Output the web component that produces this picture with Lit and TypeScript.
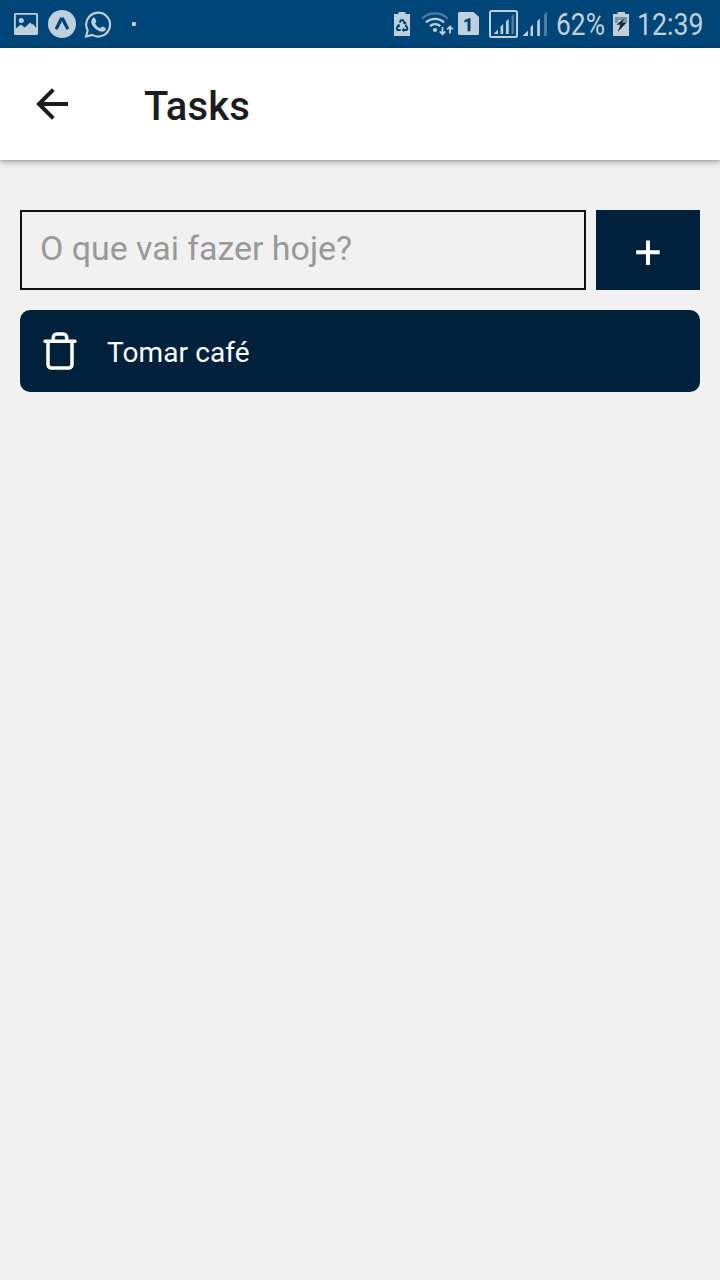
import { LitElement, html, svg, css } from "lit";
import { customElement, property, state } from "lit/decorators.js";

@customElement("status-bar")
class StatusBar extends LitElement {
  static styles = css`
    :host { display: flex; justify-content: space-between; height: 48px; background: #004578; color: #bfd0dd; }
    .group { display: flex; }
    .left { padding-left: 12px; }
    .right { padding-right: 12px; }
    svg { display: block; fill: currentColor; flex: none; overflow: visible; }
    .line { fill: none; stroke: currentColor; }
    .cut { fill: #004578; }
    .cutline { fill: none; stroke: #004578; }
    .dim { opacity: 0.4; }
    text { font-family: Roboto, sans-serif; font-size: 30.5px; }
  `;

  // Every glyph is drawn in bar coordinates; x and w select its slot.
  private slotOf(x: number, w: number, content: unknown) {
    return html`<svg width=${w} height="48" viewBox="${x} 0 ${w} 48">${content}</svg>`;
  }

  render() {
    return html`
      <div class="group left">
        ${this.slotOf(12, 32, svg`
          <path fill-rule="evenodd" d="M15.5 13h21a1.5 1.5 0 0 1 1.5 1.5v19a1.5 1.5 0 0 1-1.5 1.5h-21a1.5 1.5 0 0 1-1.5-1.5v-19a1.5 1.5 0 0 1 1.5-1.5zM15.800 14.800v13.700l5-4 4 3 5.500-5 1.700 2 1-.6 3.200 4.100V14.800z"/>
          <circle cx="21.300" cy="20.500" r="2.500"/>`)}
        ${this.slotOf(44, 36, svg`
          <circle cx="62" cy="24" r="14"/>
          <path class="cut" d="M60.200 17.500h3.600c1.800 3 3.400 7 5.200 10.200.3.800-1.600 2.400-2.600 1.800-1.700-2.300-2.800-5.400-4.400-8.200-1.600 2.800-2.700 5.900-4.400 8.200-1 .6-2.900-1-2.600-1.800 1.800-3.200 3.400-7.200 5.200-10.200z"/>`)}
        ${this.slotOf(80, 40, svg`
          <path class="line" stroke-width="2.100" d="M86 36.600l1.700-6.300a11.900 11.900 0 1 1 4.500 4.600z"/>
          <path d="M93 17.900c.7-.5 1.600-.4 2 .4l1.300 2.900c.3.800-.9 1.600-1.300 2.200 1.300 2.400 2.900 3.800 5.300 4.900.8-.6 1.500-2.100 2.300-1.800l2.900 1.400c.8.500.1 2.500-.8 3.100-2.100 1.500-5 .5-7.400-.9-2.800-1.600-5.100-4.300-5.800-6.800-.5-2.100.1-4.400 1.500-5.400z"/>`)}
        ${this.slotOf(120, 20, svg`<path d="M132.500 22h2.500l1 1v2l-1 1h-2.500l-.5-.5v-3z"/>`)}
      </div>
      <div class="group right">
        ${this.slotOf(390, 26, svg`
          <path d="M398.500 12h7v2h4.500v22h-16v-22h4.500z"/>
          <path class="cutline" stroke-width="2" d="M399.600 22.500l1.300-2.200h2.200l1.700 2.900M398.600 25l-1.900 3.400.8 1.500h3.200M405.600 25l1.900 3.400-.8 1.500h-2.700"/>
          <path class="cut" d="M406.300 21.500v3.200l-3.500-1zM404.200 27.600v4.600l-2.600-2.300zM396.300 25.500l3.200-1.400.7 3.200z"/>`)}
        ${this.slotOf(416, 39, svg`
          <path class="line dim" stroke-width="2.300" d="M422.300 18.300a18.800 18.800 0 0 1 25.400 0"/>
          <path class="line" stroke-width="2.300" d="M426 22.300a13.300 13.300 0 0 1 18 0M430 26.200a7.500 7.500 0 0 1 10.300 0"/>
          <circle cx="435" cy="30" r="2.100"/>
          <path class="line" stroke-width="1.800" d="M442.500 27v7.500M439.700 31.400l2.800 2.900 2.800-2.900M450 33.500v-7M447.200 29.400l2.800-2.900 2.800 2.900"/>`)}
        ${this.slotOf(455, 29, svg`
          <path d="M459.500 12h14l5.500 5v16.500a1.500 1.500 0 0 1-1.500 1.500h-18a1.500 1.500 0 0 1-1.500-1.500v-20a1.500 1.500 0 0 1 1.500-1.500z"/>
          <path class="cut" d="M470.500 18v13.300h-3v-9.800l-3 1v-2.400l5.200-2.100z"/>`)}
        ${this.slotOf(484, 37, svg`
          <rect class="line" x="490" y="11" width="27" height="26" rx="1.500" stroke-width="2"/>
          <path d="M493.500 34l4.500-4.500V34zM500.500 34v-7.500l2.700-2.500v10zM506 34V21.500l2.700-2.700V34z"/>
          <path class="dim" d="M511.500 34V16.500l2.500-2.500v20z"/>`)}
        ${this.slotOf(521, 34, svg`
          <path d="M522.500 36l5.500-5.500V36zM530.500 36v-9l2.500-2.500V36zM537.200 36V21.200l2.700-2.700V36z"/>
          <path class="dim" d="M544 36V14.500l3-3V36z"/>`)}
        ${this.slotOf(555, 53, svg`<text x="556" y="34.800" textLength="49" lengthAdjust="spacingAndGlyphs">62%</text>`)}
        ${this.slotOf(608, 25, svg`
          <path d="M617.500 12h7.500v2h4v22h-16v-22h4.500z"/>
          <path fill="#7595ae" d="M615 17h12v6h-12z"/>
          <path fill="#bfd0dd" d="M618 20h5v4h-5z"/>
          <path fill="#1b2630" d="M624 18.500l-7.600 6.300h4l-2.700 7.200 8.700-9.200h-4z"/>`)}
        ${this.slotOf(633, 75, svg`<text x="637" y="34.800" textLength="66.500" lengthAdjust="spacingAndGlyphs">12:39</text>`)}
      </div>`;
  }
}

@customElement("task-item")
class TaskItem extends LitElement {
  @property() label = "";

  static styles = css`
    :host { display: flex; align-items: center; height: 82px; box-sizing: border-box; padding-left: 22px;
      border-radius: 10px; background: #00213b; color: #fff; font: 28px/36px Roboto, sans-serif; }
    svg { display: block; margin-right: 29px; fill: none; stroke: currentColor; stroke-width: 3.500; stroke-linecap: round; stroke-linejoin: round; }
    .label { padding-top: 4px; letter-spacing: 0.1px; }
  `;

  render() {
    return html`
      <svg width="36" height="40" viewBox="42 331 36 40">
        <path d="M45 341.200h30M48 341.500V364.500a3.500 3.500 0 0 0 3.500 3.500h17a3.500 3.500 0 0 0 3.500-3.500v-23M53.300 341v-3.500a3.500 3.500 0 0 1 3.500-3.500h6.400a3.500 3.500 0 0 1 3.500 3.500v3.500"/>
      </svg>
      <span class="label">${this.label}</span>`;
  }
}

@customElement("app-root")
class AppRoot extends LitElement {
  @state() private tasks = ["Tomar café"];

  static styles = css`
    :host { display: flex; flex-direction: column; min-height: 1280px; background: #f1f1f1; font-family: Roboto, sans-serif; }
    header { display: flex; align-items: center; height: 112px; padding-left: 32px; box-sizing: border-box; background: #fff;
      box-shadow: 0 2px 6px rgba(0, 0, 0, 0.33), 0 0 2px rgba(0, 0, 0, 0.15); }
    .back { display: block; fill: none; stroke: #1c1c1e; stroke-width: 4; margin-right: 72px; }
    h1 { margin: 0; padding-top: 6px; font-size: 40px; line-height: 48px; font-weight: 500; color: #1c1c1e; letter-spacing: 0.1px; }
    main { display: flex; flex-direction: column; gap: 20px; padding: 50px 20px; }
    form { display: flex; gap: 10px; height: 80px; }
    input { flex: 1; min-width: 0; box-sizing: border-box; margin: 0; padding: 0 18px 5px; border: 2px solid #111; border-radius: 0;
      background: transparent; font: 34px Roboto, sans-serif; color: #222; letter-spacing: -0.05px; outline: none; }
    input::placeholder { color: #999; opacity: 1; }
    .add { width: 104px; padding: 0; border: 0; background: #00213b; display: flex; align-items: center; justify-content: center; }
    .add svg { display: block; fill: none; stroke: #fff; stroke-width: 4; }
    .list { display: flex; flex-direction: column; gap: 20px; }
  `;

  render() {
    return html`
      <status-bar></status-bar>
      <header>
        <svg class="back" width="40" height="40" viewBox="32 84 40 40">
          <path d="M38 104h30M53.300 89.700L39 104l14.300 14.300"/>
        </svg>
        <h1>Tasks</h1>
      </header>
      <main>
        <form>
          <input placeholder="O que vai fazer hoje?" aria-label="O que vai fazer hoje?">
          <button class="add" type="button" aria-label="+">
            <svg width="24" height="30" viewBox="636 235 24 30"><path d="M636.200 252.300h23.500M648 240.500V265"/></svg>
          </button>
        </form>
        <div class="list">${this.tasks.map((t) => html`<task-item .label=${t}></task-item>`)}</div>
      </main>`;
  }
}
